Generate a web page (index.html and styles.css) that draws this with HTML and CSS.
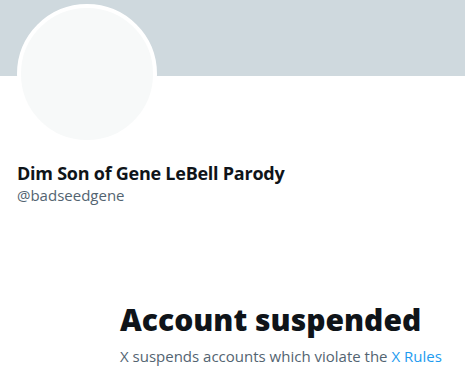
FILE: index.html
```html
<!DOCTYPE html>
<html lang="en">
<head>
    <meta charset="UTF-8">
    <meta name="viewport" content="width=device-width, initial-scale=1.0">
    <title>Account suspended</title>
    <link rel="stylesheet" href="styles.css">
</head>
<body>

<div class="profile">
    <!-- Cabecera -->
    <div class="banner"></div>
    <div class="avatar-row">
        <div class="avatar"></div>
    </div>

    <!-- Nombre -->
    <div class="user-info">
        <div class="user-name">Dim Son of Gene LeBell Parody</div>
        <div class="user-handle">@badseedgene</div>
    </div>

    <!-- Estado -->
    <div class="empty-state">
        <h1>Account suspended</h1>
        <p>X suspends accounts which violate the <a href="#">X Rules</a></p>
    </div>
</div>

</body>
</html>
```

FILE: styles.css
```css
body {
    font-family: "Open Sans", "Noto Sans", Arial, sans-serif;
    background-color: #fff;
    color: #0f1419;
    margin: 0;
}
.banner {
    height: 76px;
    background-color: #cfd9de;
}
.avatar-row {
    padding-left: 17px;
    margin-top: -72px;
}
.avatar {
    width: 132px;
    height: 132px;
    border: 4px solid #fff;
    border-radius: 50%;
    background-color: #f7f9f9;
}
.user-info {
    padding: 17px 17px 0;
}
.user-name {
    font-size: 18px;
    font-weight: 700;
    letter-spacing: -0.25px;
    line-height: 24px;
}
.user-handle {
    font-size: 15px;
    color: #536471;
    line-height: 20px;
}
.empty-state {
    padding: 97px 0 0 120px;
}
.empty-state h1 {
    font-size: 30px;
    font-weight: 800;
    line-height: 36px;
    margin: 0 0 8px;
}
.empty-state p {
    font-size: 15px;
    color: #536471;
    line-height: 20px;
    margin: 0;
}
.empty-state a {
    color: #1d9bf0;
    text-decoration: none;
}
```
